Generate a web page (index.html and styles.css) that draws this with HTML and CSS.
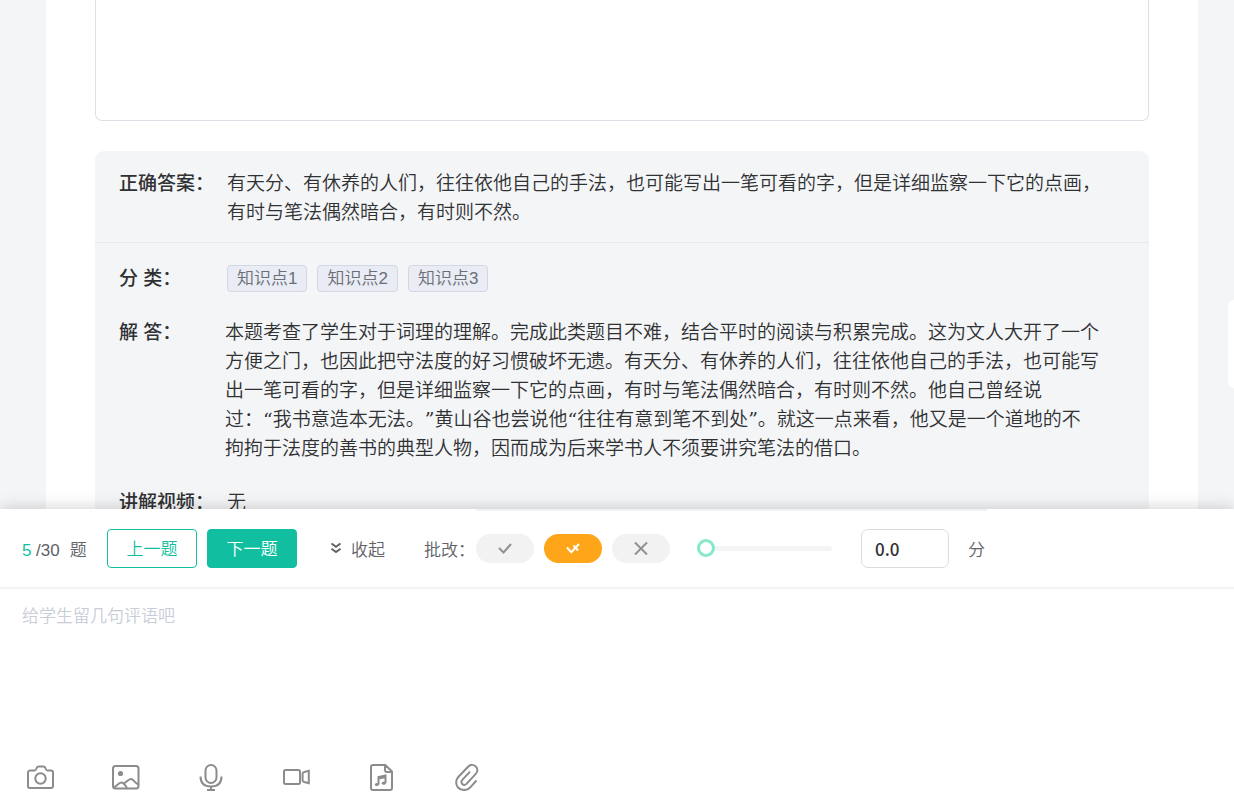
FILE: index.html
```html
<!DOCTYPE html>
<html lang="zh-CN">
<head>
<meta charset="utf-8">
<meta name="viewport" content="width=device-width, initial-scale=1">
<title>批改</title>
<link rel="stylesheet" href="styles.css">
</head>
<body>
<main class="page">
  <article class="sheet">
    <div class="work"></div>
    <section class="answer">
      <div class="answer-key">
        <div class="row">
          <h2 class="label">正确答案：</h2>
          <p class="text">有天分、有休养的人们，往往依他自己的手法，也可能写出一笔可看的字，但是详细监察一下它的点画，<br>有时与笔法偶然暗合，有时则不然。</p>
        </div>
      </div>
      <div class="details">
        <div class="row">
          <h2 class="label">分 类：</h2>
          <div class="tags"><span class="tag">知识点1</span><span class="tag">知识点2</span><span class="tag">知识点3</span></div>
        </div>
        <div class="row">
          <h2 class="label label-narrow">解 答：</h2>
          <p class="text">本题考查了学生对于词理的理解。完成此类题目不难，结合平时的阅读与积累完成。这为文人大开了一个<br>方便之门，也因此把守法度的好习惯破坏无遗。有天分、有休养的人们，往往依他自己的手法，也可能写<br>出一笔可看的字，但是详细监察一下它的点画，有时与笔法偶然暗合，有时则不然。他自己曾经说<br>过：“我书意造本无法。”黄山谷也尝说他“往往有意到笔不到处”。就这一点来看，他又是一个道地的不<br>拘拘于法度的善书的典型人物，因而成为后来学书人不须要讲究笔法的借口。</p>
        </div>
        <div class="row">
          <h2 class="label">讲解视频：</h2>
          <p class="text">无</p>
        </div>
      </div>
    </section>
  </article>
  <button class="side-tab" type="button" aria-label="展开侧栏"></button>
</main>
<section class="panel">
  <div class="toolbar">
    <div class="count"><span class="current">5</span><span>/30</span><span class="unit">题</span></div>
    <div class="nav">
      <button class="btn" type="button">上一题</button>
      <button class="btn btn-primary" type="button">下一题</button>
    </div>
    <button class="collapse" type="button">
      <svg width="12" height="12" viewBox="0 0 12 12"><path d="M1.500 1.500 6 4.700l4.500-3.200M1.500 6.800 6 10l4.500-3.200"/></svg>
      收起
    </button>
    <div class="marks">
      <span>批改：</span>
      <button class="pill" type="button" aria-label="正确"><svg width="16" height="14" viewBox="0 0 16 14"><path d="M2 7 6.500 11.500 14 3"/></svg></button>
      <button class="pill pill-on" type="button" aria-label="半对"><svg width="16" height="14" viewBox="0 0 16 14"><path d="m2 6.500 4.300 4.800L14 3"/><path d="m8.500 4.500 4.500 5"/></svg></button>
      <button class="pill" type="button" aria-label="错误"><svg width="16" height="14" viewBox="0 0 16 14"><path d="m2 1.500 12 12M14 1.500l-12 12"/></svg></button>
    </div>
    <input class="slider" type="range" min="0" max="10" value="0" aria-label="分数">
    <label class="score"><input class="score-input" type="text" value="0.0"><span>分</span></label>
  </div>
  <textarea class="comment" placeholder="给学生留几句评语吧" aria-label="评语"></textarea>
  <div class="attach">
    <button class="tool" type="button" aria-label="拍照"><svg width="30" height="30" viewBox="0 0 30 30"><path d="M4 8.500h4.500c1 0 1.300-.5 1.700-1.500.5-1.500 1-2.500 2-2.500h5.600c1 0 1.500 1 2 2.500.4 1 .7 1.500 1.700 1.500H25a2 2 0 0 1 2 2V24a2 2 0 0 1-2 2H4a2 2 0 0 1-2-2V10.500a2 2 0 0 1 2-2Z"/><circle cx="14.500" cy="16.500" r="5.200"/></svg></button>
    <button class="tool" type="button" aria-label="图片"><svg width="30" height="30" viewBox="0 0 30 30"><rect x="2" y="4" width="25.500" height="22.500" rx="2.500"/><circle class="solid" cx="9.500" cy="11.500" r="2.600"/><path d="M3 25.500c3-2 5-5 7.500-5 1.700 0 3 1.500 5.500 5.500M13 21.500c2.500-1.500 4.500-4.500 7-4.500s3.500 4 7.500 5.500"/></svg></button>
    <button class="tool" type="button" aria-label="录音"><svg width="30" height="30" viewBox="0 0 30 30"><rect x="9.500" y="3" width="11" height="18" rx="5.500"/><path d="M4.500 14.500c0 6.500 4 10 10.500 10s10.500-3.500 10.500-10M15 24.500V28M11 28h8"/></svg></button>
    <button class="tool" type="button" aria-label="视频"><svg width="30" height="30" viewBox="0 0 30 30"><rect x="3" y="8" width="16" height="14" rx="1.500"/><path d="M27.800 8.800v12.400l-4.500-1.200c-1-.3-1.700-.8-1.700-1.800v-6.400c0-1 .7-1.500 1.700-1.800Z"/></svg></button>
    <button class="tool" type="button" aria-label="音频"><svg width="30" height="30" viewBox="0 0 30 30"><path d="M7 3h12.300L26 9.500V26a2 2 0 0 1-2 2H7a2 2 0 0 1-2-2V5a2 2 0 0 1 2-2ZM19 3v5a2 2 0 0 0 2 2h5M12.500 22.500v-7.500l7-1.500v7.500M12.500 16.500l7-1.500"/><ellipse class="solid" cx="10.800" cy="22.500" rx="2" ry="1.600"/><ellipse class="solid" cx="17.800" cy="21.200" rx="2" ry="1.600"/></svg></button>
    <button class="tool" type="button" aria-label="附件"><svg width="30" height="30" viewBox="0 0 30 30"><path d="m25.500 18.500-6 6.700c-4 4.300-10 3.300-12.500.3s-2.500-7.500.5-10.700L17.300 4.500c2.200-2.300 5.500-2 7.500-.1s2.200 5.200 0 7.500l-9.300 10c-1.300 1.300-3 1.300-4.200.2s-1.200-3 0-4.200l7.700-8.300"/></svg></button>
  </div>
</section>
</body>
</html>
```
FILE: styles.css
```css
* {
  box-sizing: border-box;
}

body {
  display: flex;
  flex-direction: column;
  height: 100vh;
  margin: 0;
  overflow: hidden;
  background: #f4f5f7;
  color: #303133;
  font-family: "Liberation Sans", "Noto Sans CJK SC", sans-serif;
  font-size: 17px;
  font-weight: 350;
  text-spacing-trim: space-all;
}

button,
input,
textarea {
  margin: 0;
  padding: 0;
  border: 0;
  background: none;
  color: inherit;
  font: inherit;
}

svg {
  display: block;
  fill: none;
  stroke: currentColor;
  stroke-width: 2;
}

.solid {
  fill: currentColor;
  stroke: none;
}

.page {
  position: relative;
  flex: 1;
  min-height: 0;
  overflow: hidden;
}

.sheet {
  display: flex;
  flex-direction: column;
  gap: 30px;
  margin: 0 36px 0 46px;
  padding: 0 49px;
  background: #fff;
}

.work {
  height: 121px;
  border: 1px solid #dcdfe6;
  border-top: 0;
  border-radius: 0 0 7px 7px;
}

.answer {
  border-radius: 9px;
  background: #f4f5f7;
  font-size: 19px;
  line-height: 29px;
}

.answer-key {
  padding: 18px 24px 15px;
  border-bottom: 1px solid #e6e8eb;
}

.details {
  display: flex;
  flex-direction: column;
  gap: 25px;
  padding: 21px 24px;
}

.row {
  display: flex;
}

.label {
  flex: none;
  width: 108px;
  margin: 0;
  font-size: 19px;
  font-weight: 500;
}

.label-narrow {
  width: 106px;
}

.text {
  flex: 1;
  margin: 0;
  font-family: "DejaVu Serif", "Noto Sans CJK SC", sans-serif;
}

.tags {
  display: flex;
  align-items: center;
  gap: 10px;
}

.tag {
  padding: 0 9px;
  border: 1px solid #d3d7e2;
  border-radius: 4px;
  background: #e9ecf4;
  color: #6b6e74;
  font-size: 17px;
  line-height: 25px;
}

.side-tab {
  position: absolute;
  top: 300px;
  right: 0;
  width: 6px;
  height: 88px;
  border-radius: 6px 0 0 6px;
  background: #fff;
}

.panel {
  position: relative;
  background: #fff;
  box-shadow: 0 0 16px rgba(0, 0, 0, 0.2);
}

.panel::before {
  content: "";
  position: absolute;
  top: 0;
  left: 476px;
  width: 511px;
  height: 2px;
  background: #f1f2f4;
}

.toolbar {
  display: flex;
  align-items: center;
  height: 80px;
  padding: 0 22px;
  border-bottom: 2px solid #f2f3f4;
  color: #606266;
  white-space: nowrap;
}

.count {
  display: flex;
  align-items: baseline;
  width: 85px;
}

.current {
  width: 14px;
  color: #11bfa0;
}

.unit {
  margin-left: 10px;
}

.nav {
  display: flex;
  gap: 10px;
}

.btn {
  width: 90px;
  height: 39px;
  padding-bottom: 2px;
  border: 1px solid #11bfa0;
  border-radius: 4px;
  color: #11bfa0;
}

.btn-primary {
  background: #11bfa0;
  color: #fff;
}

.collapse {
  display: flex;
  align-items: center;
  gap: 9px;
  margin-left: 33px;
}

.marks {
  display: flex;
  align-items: center;
  gap: 10px;
  margin-left: 39px;
}

.marks span {
  width: 42px;
}

.pill {
  display: grid;
  place-items: center;
  width: 58px;
  height: 29px;
  border-radius: 15px;
  background: #f2f2f2;
  color: #909090;
}

.pill-on {
  background: #ffa51a;
  color: #fff;
}

.slider {
  width: 135px;
  height: 18px;
  margin-left: 27px;
  appearance: none;
}

.slider::-webkit-slider-runnable-track {
  height: 5px;
  border-radius: 3px;
  background: #f4f4f4;
}

.slider::-webkit-slider-thumb {
  width: 18px;
  height: 18px;
  margin-top: -7px;
  border: 3px solid #84e8cc;
  border-radius: 50%;
  background: #fff;
  appearance: none;
}

.score {
  display: flex;
  align-items: center;
  gap: 19px;
  margin-left: 29px;
}

.score-input {
  width: 88px;
  height: 39px;
  padding: 0 13px;
  border: 1px solid #dcdcdc;
  border-radius: 7px;
  color: #303133;
  font-family: "Noto Sans CJK SC", sans-serif;
  font-weight: 500;
}

.comment {
  display: block;
  width: 100%;
  height: 168px;
  padding: 15px 22px;
  line-height: 26px;
  outline: 0;
  resize: none;
}

.comment::placeholder {
  color: #c9cdd8;
}

.attach {
  display: flex;
  gap: 55px;
  padding: 5px 26px 10px;
  color: #8c8c8c;
}

.tool {
  width: 30px;
  height: 30px;
}
```
